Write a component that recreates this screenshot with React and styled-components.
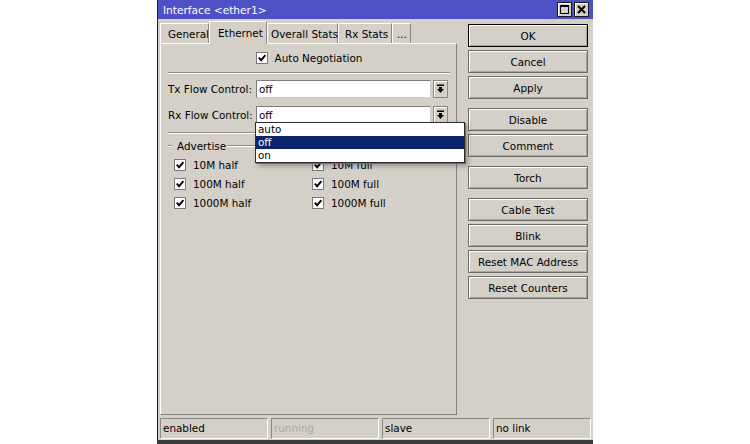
import React from "react"
import styled, { createGlobalStyle } from "styled-components"

const GlobalStyle = createGlobalStyle`
  body {
    margin: 0;
    background: #fff;
    font-family: "DejaVu Sans", "Liberation Sans", sans-serif;
    font-size: 10.4px;
    color: #000;
  }
`

const Window = styled.div`
  width: 436px;
  height: 444px;
  margin: 0 auto;
  box-sizing: border-box;
  background: #d4d0c8;
  border-left: 1px solid #1f1f1f;
  border-bottom: 4px solid #3b3b3b;
  display: flex;
  flex-direction: column;
`

const TitleBar = styled.div`
  height: 19px;
  flex-shrink: 0;
  background: #4e51c6;
  color: #fff;
  font-size: 10.6px;
  display: flex;
  align-items: center;
  padding: 0 4px 0 5px;
`

const Title = styled.div`
  flex: 1;
`

const TitleButton = styled.div`
  width: 15px;
  height: 15px;
  box-sizing: border-box;
  margin-left: 2px;
  background: #d4d0c8;
  border: 1px solid #1a1a1a;
  box-shadow: inset 1px 1px 0 #fff;
  display: flex;
  align-items: center;
  justify-content: center;
`

const Body = styled.div`
  flex: 1;
  display: flex;
  padding: 2px 5px 0 2px;
  min-height: 0;
`

const LeftCol = styled.div`
  width: 297px;
  display: flex;
  flex-direction: column;
`

const TabRow = styled.div`
  height: 22px;
  display: flex;
  align-items: flex-end;
  position: relative;
  z-index: 1;
`

const Tab = styled.div`
  box-sizing: border-box;
  flex-shrink: 0;
  width: ${p => p.$w}px;
  padding-left: ${p => p.$pad}px;
  padding-top: ${p => (p.$active ? 0 : 1)}px;
  height: ${p => (p.$active ? 23 : 20)}px;
  margin-bottom: ${p => (p.$active ? -1 : 0)}px;
  border-top: 1px solid #fff;
  border-left: 1px solid #fff;
  border-right: 1px solid #8a8782;
  background: #d4d0c8;
  display: flex;
  align-items: center;
  white-space: nowrap;
  overflow: ${p => (p.$clip ? "hidden" : "visible")};
`

const Panel = styled.div`
  height: 372px;
  box-sizing: border-box;
  border: 1px solid;
  border-color: #fff #85827d #85827d #fff;
  display: flex;
  flex-direction: column;
  padding: 0 6px 0 7px;
`

const CheckRow = styled.div`
  display: flex;
  align-items: center;
  justify-content: ${p => (p.$center ? "center" : "flex-start")};
  gap: 7px;
  height: 14px;
  margin-top: ${p => p.$top || 0}px;
`

const Box = styled.div`
  width: 12px;
  height: 12px;
  box-sizing: border-box;
  background: #fff;
  border: 1px solid #7a7a7a;
  flex-shrink: 0;
  display: flex;
  align-items: center;
  justify-content: center;
`

const Separator = styled.div`
  margin-top: ${p => p.$top}px;
  border-top: 1px solid #8f8c87;
  border-bottom: 1px solid #fff;
`

const FieldRow = styled.div`
  display: flex;
  align-items: center;
  height: 18px;
  margin-top: ${p => p.$top}px;
`

const Label = styled.div`
  width: 88px;
  flex-shrink: 0;
`

const InputWrap = styled.div`
  position: relative;
  width: 175px;
  height: 18px;
`

const Input = styled.div`
  height: 18px;
  box-sizing: border-box;
  background: #fff;
  border: 1px solid;
  border-color: #7d7d7d #cfcfcf #cfcfcf #7d7d7d;
  padding-left: 2px;
  display: flex;
  align-items: center;
`

const ArrowButton = styled.div`
  width: 15px;
  height: 18px;
  margin-left: 2px;
  box-sizing: border-box;
  border: 1px solid #8a8782;
  box-shadow: inset 1px 1px 0 #fff;
  display: flex;
  align-items: center;
  justify-content: center;
`

const Dropdown = styled.div`
  position: absolute;
  z-index: 10;
  top: 16px;
  left: -1px;
  width: 210px;
  box-sizing: border-box;
  background: #fff;
  border: 1px solid #2e2e2e;
  box-shadow: 1px 1px 0 #6d6b67, 3px 3px 5px rgba(0, 0, 0, 0.3);
`

const Option = styled.div`
  height: 13px;
  line-height: 13px;
  padding-left: 2px;
  background: ${p => (p.$selected ? "#0a246a" : "#fff")};
  color: ${p => (p.$selected ? "#fff" : "#000")};
`

const GroupHeader = styled.div`
  display: flex;
  align-items: center;
  height: 12px;
  margin-top: 6px;
`

const GroupLine = styled.div`
  flex: ${p => (p.$grow ? 1 : "none")};
  width: ${p => (p.$grow ? "auto" : "4px")};
  border-top: 1px solid #8f8c87;
  border-bottom: 1px solid #fff;
`

const GroupTitle = styled.div`
  padding: 0 1px 0 5px;
`

const CheckGrid = styled.div`
  display: grid;
  grid-template-columns: 138px 1fr;
  grid-auto-rows: 19px;
  align-items: center;
  padding-left: 6px;
  margin-top: 3px;
`

const RightCol = styled.div`
  width: 120px;
  margin-left: 11px;
  padding-top: 3px;
  display: flex;
  flex-direction: column;
`

const Button = styled.div`
  height: 23px;
  box-sizing: border-box;
  margin-top: ${p => p.$gap}px;
  border: 1px solid ${p => (p.$default ? "#000" : "#6e6c68")};
  box-shadow: inset 1px 1px 0 #fff, inset -1px -1px 0 #a8a59f;
  display: flex;
  align-items: center;
  justify-content: center;
  white-space: nowrap;
`

const StatusBar = styled.div`
  display: grid;
  grid-template-columns: 108px 108px 108px 98px;
  column-gap: 3px;
  padding: 3px 0 1px 2px;
`

const StatusCell = styled.div`
  height: 21px;
  box-sizing: border-box;
  border: 1px solid;
  border-color: #8c8984 #fff #fff #8c8984;
  padding: 0 0 1px 2px;
  display: flex;
  align-items: center;
  color: ${p => (p.$dim ? "#aaa7a0" : "#000")};
`

const Check = () => (
  <svg width="10" height="10" viewBox="0 0 10 10">
    <path d="M1.8 4.6 L4.1 7.2 L8.4 2.2" stroke="#000" strokeWidth="1.9" fill="none" />
  </svg>
)

const CheckItem = ({ label, center, top }) => (
  <CheckRow $center={center} $top={top}>
    <Box>
      <Check />
    </Box>
    {label}
  </CheckRow>
)

const DropArrow = () => (
  <svg width="9" height="10" viewBox="0 0 9 10">
    <rect x="1" y="0.5" width="7" height="1.5" fill="#000" />
    <path d="M3 3 H6 V5 H8 L4.5 9 L1 5 H3 Z" fill="#000" />
  </svg>
)

const tabs = [
  { name: "General", w: 49, pad: 7, clip: true },
  { name: "Ethernet", w: 58, pad: 8, active: true },
  { name: "Overall Stats", w: 71, pad: 3 },
  { name: "Rx Stats", w: 54, pad: 6 },
  { name: "...", w: 19, pad: 4 },
]

const buttons = [
  { label: "OK", gap: 0, def: true },
  { label: "Cancel", gap: 3 },
  { label: "Apply", gap: 3 },
  { label: "Disable", gap: 9 },
  { label: "Comment", gap: 3 },
  { label: "Torch", gap: 9 },
  { label: "Cable Test", gap: 9 },
  { label: "Blink", gap: 3 },
  { label: "Reset MAC Address", gap: 3 },
  { label: "Reset Counters", gap: 3 },
]

export default function App() {
  return (
    <>
      <GlobalStyle />
      <Window>
        <TitleBar>
          <Title>Interface &lt;ether1&gt;</Title>
          <TitleButton>
            <svg width="9" height="9" viewBox="0 0 9 9">
              <rect x="0.5" y="0.5" width="8" height="8" fill="none" stroke="#000" />
              <rect x="0" y="0" width="9" height="2" fill="#000" />
            </svg>
          </TitleButton>
          <TitleButton>
            <svg width="9" height="9" viewBox="0 0 9 9">
              <path d="M1 1 L8 8 M8 1 L1 8" stroke="#000" strokeWidth="2" />
            </svg>
          </TitleButton>
        </TitleBar>
        <Body>
          <LeftCol>
            <TabRow>
              {tabs.map(t => (
                <Tab key={t.name} $w={t.w} $pad={t.pad} $active={t.active} $clip={t.clip}>
                  {t.name}
                </Tab>
              ))}
            </TabRow>
            <Panel>
              <CheckItem label="Auto Negotiation" center top={7} />
              <Separator $top={7} />
              <FieldRow $top={6}>
                <Label>Tx Flow Control:</Label>
                <InputWrap>
                  <Input>off</Input>
                </InputWrap>
                <ArrowButton>
                  <DropArrow />
                </ArrowButton>
              </FieldRow>
              <FieldRow $top={8}>
                <Label>Rx Flow Control:</Label>
                <InputWrap>
                  <Input>off</Input>
                  <Dropdown>
                    <Option>auto</Option>
                    <Option $selected>off</Option>
                    <Option>on</Option>
                  </Dropdown>
                </InputWrap>
                <ArrowButton>
                  <DropArrow />
                </ArrowButton>
              </FieldRow>
              <Separator $top={8} />
              <GroupHeader>
                <GroupLine />
                <GroupTitle>Advertise</GroupTitle>
                <GroupLine $grow />
              </GroupHeader>
              <CheckGrid>
                <CheckItem label="10M half" />
                <CheckItem label="10M full" />
                <CheckItem label="100M half" />
                <CheckItem label="100M full" />
                <CheckItem label="1000M half" />
                <CheckItem label="1000M full" />
              </CheckGrid>
            </Panel>
          </LeftCol>
          <RightCol>
            {buttons.map(b => (
              <Button key={b.label} $gap={b.gap} $default={b.def}>
                {b.label}
              </Button>
            ))}
          </RightCol>
        </Body>
        <StatusBar>
          <StatusCell>enabled</StatusCell>
          <StatusCell $dim>running</StatusCell>
          <StatusCell>slave</StatusCell>
          <StatusCell>no link</StatusCell>
        </StatusBar>
      </Window>
    </>
  )
}
